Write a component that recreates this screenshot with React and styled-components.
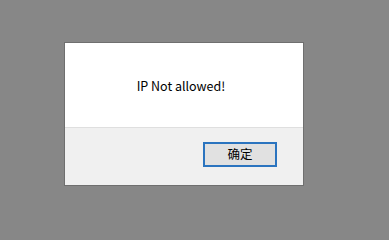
import React from "react";
import styled, { createGlobalStyle } from "styled-components";

const Global = createGlobalStyle`
  html, body { margin: 0; padding: 0; background: #878787; }
  body { font-family: "Noto Sans CJK SC", "Noto Sans", sans-serif; }
`;

const Page = styled.div`
  width: 389px;
  height: 221px;
  box-sizing: border-box;
  padding: 42px 0 0 64px;
  background: #878787;
`;

const Dialog = styled.div`
  width: 240px;
  height: 144px;
  box-sizing: border-box;
  border: 1px solid #6f6f6f;
  background: #ffffff;
  display: flex;
  flex-direction: column;
`;

const Body = styled.div`
  height: 84px;
  display: flex;
  align-items: center;
  justify-content: center;
  padding-right: 6px;
  font-size: 12.5px;
  color: #000;
`;

const Footer = styled.div`
  flex: 1;
  background: #f0f0f0;
  border-top: 1px solid #dfdfdf;
  display: flex;
  justify-content: flex-end;
  align-items: flex-start;
  padding: 14px 26px 0 0;
`;

const Button = styled.button`
  width: 74px;
  height: 25px;
  box-sizing: border-box;
  border: 2px solid #2b74bf;
  background: #e1e1e1;
  font-family: "Noto Sans CJK SC", sans-serif;
  font-size: 12.5px;
  color: #000;
  padding: 0;
  line-height: 1;
`;

export default function App() {
  return (
    <>
      <Global />
      <Page>
        <Dialog>
          <Body>IP Not allowed!</Body>
          <Footer>
            <Button>确定</Button>
          </Footer>
        </Dialog>
      </Page>
    </>
  );
}
